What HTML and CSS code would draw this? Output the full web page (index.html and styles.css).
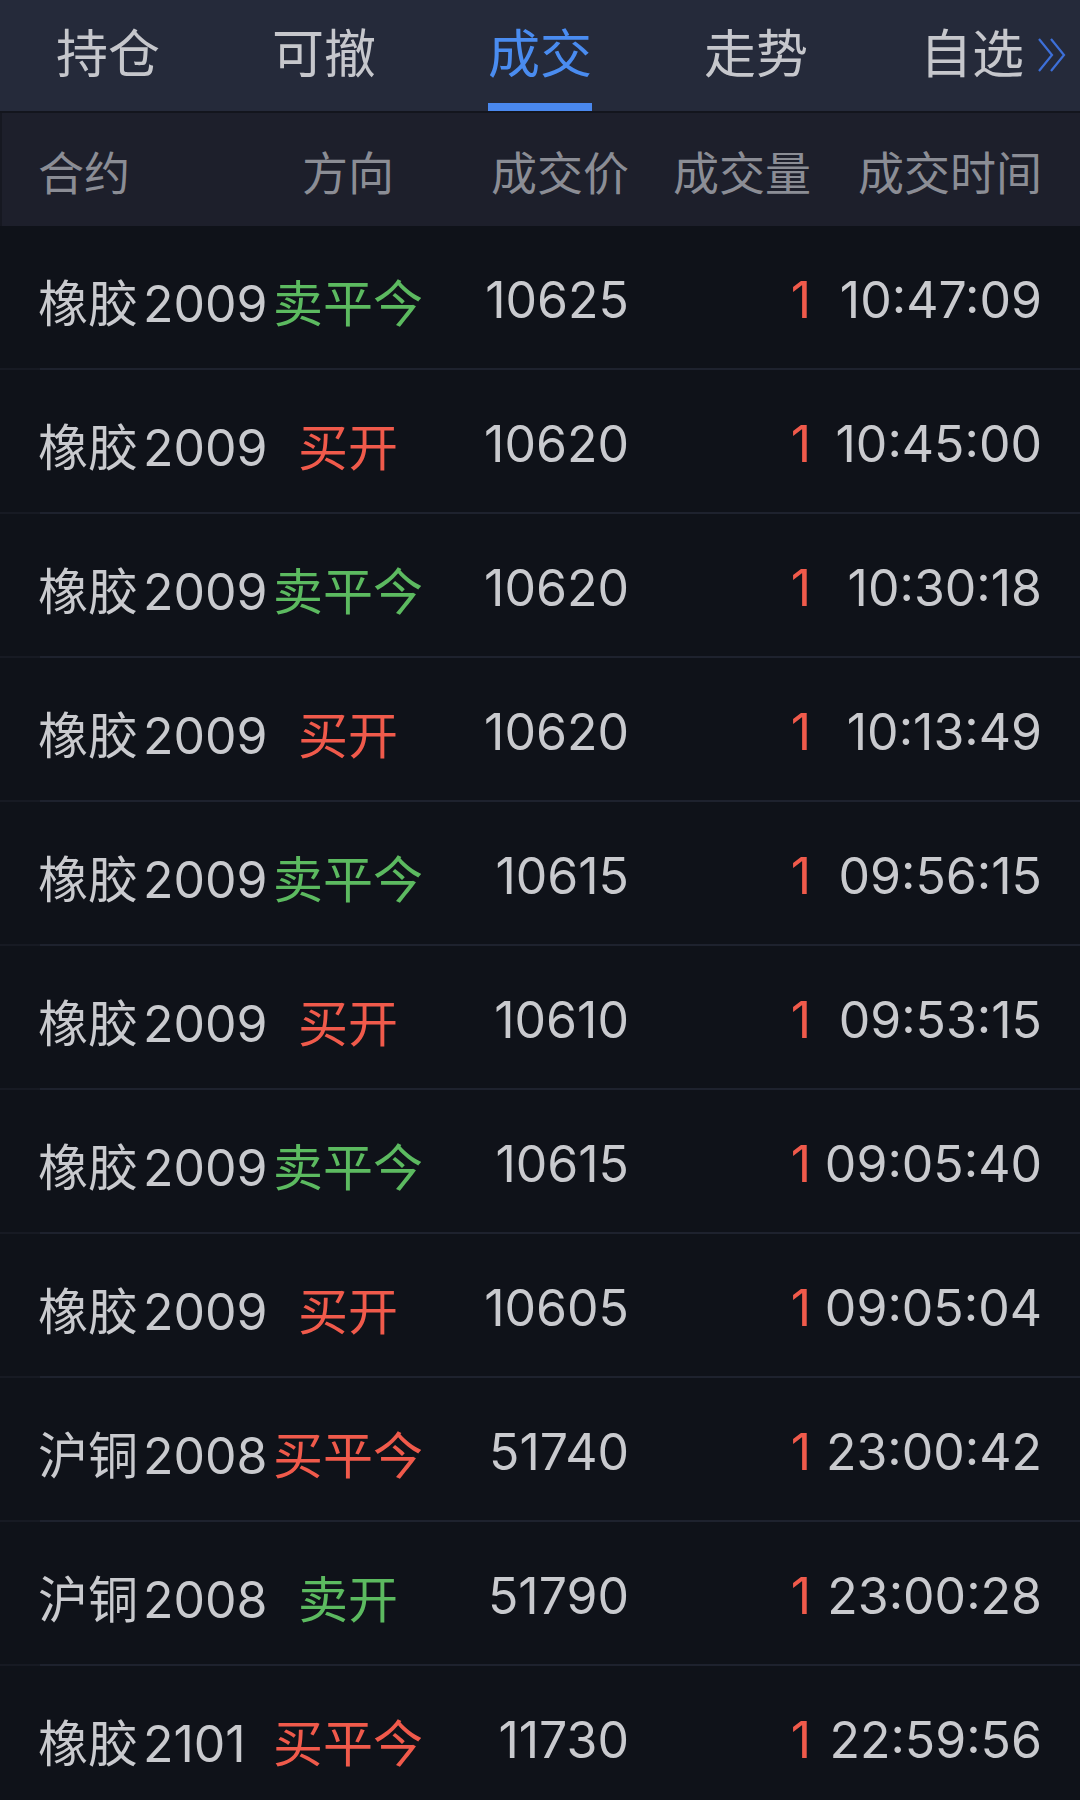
FILE: index.html
```html
<!DOCTYPE html>
<html lang="zh-CN">
<head>
<meta charset="utf-8">
<title>成交</title>
<link rel="stylesheet" href="styles.css">
</head>
<body>
<div class="page">
  <nav class="tabs">
    <div class="tab"><span class="label">持仓</span></div>
    <div class="tab"><span class="label">可撤</span></div>
    <div class="tab active"><span class="label">成交</span></div>
    <div class="tab"><span class="label">走势</span></div>
    <div class="tab"><span class="label">自选</span>
      <svg class="more" width="30" height="36" viewBox="0 0 30 36"><path d="M2 2 L15 18 L2 34 M14 2 L27 18 L14 34" fill="none" stroke="#3d6fd8" stroke-width="2.2" stroke-linejoin="miter"/></svg>
    </div>
  </nav>
  <div class="thead">
    <div class="c-name">合约</div>
    <div class="c-dir">方向</div>
    <div class="c-price">成交价</div>
    <div class="c-vol">成交量</div>
    <div class="c-time">成交时间</div>
  </div>
  <div class="tbody">
    <div class="row"><div class="c-name">橡胶<span class="code">2009</span></div><div class="c-dir green">卖平今</div><div class="c-price">10625</div><div class="c-vol red">1</div><div class="c-time">10:47:09</div></div>
    <div class="row"><div class="c-name">橡胶<span class="code">2009</span></div><div class="c-dir red">买开</div><div class="c-price">10620</div><div class="c-vol red">1</div><div class="c-time">10:45:00</div></div>
    <div class="row"><div class="c-name">橡胶<span class="code">2009</span></div><div class="c-dir green">卖平今</div><div class="c-price">10620</div><div class="c-vol red">1</div><div class="c-time">10:30:18</div></div>
    <div class="row"><div class="c-name">橡胶<span class="code">2009</span></div><div class="c-dir red">买开</div><div class="c-price">10620</div><div class="c-vol red">1</div><div class="c-time">10:13:49</div></div>
    <div class="row"><div class="c-name">橡胶<span class="code">2009</span></div><div class="c-dir green">卖平今</div><div class="c-price">10615</div><div class="c-vol red">1</div><div class="c-time">09:56:15</div></div>
    <div class="row"><div class="c-name">橡胶<span class="code">2009</span></div><div class="c-dir red">买开</div><div class="c-price">10610</div><div class="c-vol red">1</div><div class="c-time">09:53:15</div></div>
    <div class="row"><div class="c-name">橡胶<span class="code">2009</span></div><div class="c-dir green">卖平今</div><div class="c-price">10615</div><div class="c-vol red">1</div><div class="c-time">09:05:40</div></div>
    <div class="row"><div class="c-name">橡胶<span class="code">2009</span></div><div class="c-dir red">买开</div><div class="c-price">10605</div><div class="c-vol red">1</div><div class="c-time">09:05:04</div></div>
    <div class="row"><div class="c-name">沪铜<span class="code">2008</span></div><div class="c-dir red">买平今</div><div class="c-price">51740</div><div class="c-vol red">1</div><div class="c-time">23:00:42</div></div>
    <div class="row"><div class="c-name">沪铜<span class="code">2008</span></div><div class="c-dir green">卖开</div><div class="c-price">51790</div><div class="c-vol red">1</div><div class="c-time">23:00:28</div></div>
    <div class="row"><div class="c-name">橡胶<span class="code">2101</span></div><div class="c-dir red">买平今</div><div class="c-price">11730</div><div class="c-vol red">1</div><div class="c-time">22:59:56</div></div>
  </div>
</div>
</body>
</html>
```
FILE: styles.css
```css
* { box-sizing: border-box; }
html, body {
  margin: 0;
  padding: 0;
  background: #0f1219;
}
body {
  font-family: Inter, "Noto Sans CJK SC", sans-serif;
  color: #c9cace;
}
.page {
  width: 1080px;
  min-height: 1800px;
  background: #0f1219;
  overflow: hidden;
}
.tabs {
  display: grid;
  grid-template-columns: repeat(5, 1fr);
  height: 113px;
  background: #252a3a;
  border-bottom: 2px solid #13151d;
}
.tab {
  position: relative;
  display: flex;
  justify-content: center;
  align-items: flex-end;
  font-size: 52px;
  color: #c6c7cc;
}
.label {
  line-height: 60px;
  padding-bottom: 18px;
  border-bottom: 8px solid transparent;
}
.tab.active .label {
  color: #4a8cf0;
  border-bottom-color: #4a88ee;
}
.more {
  position: absolute;
  right: 13px;
  top: 37px;
}
.thead, .row {
  display: grid;
  grid-template-columns: 200px 220px 171px 182px 231px;
  padding: 0 38px;
  align-items: center;
  white-space: nowrap;
}
.thead {
  height: 113px;
  background: #1d1f2b;
  font-size: 46px;
  color: #8b8d95;
  box-shadow: inset 2px 0 0 #161821;
}
.row {
  height: 144px;
  padding-top: 5px;
  padding-bottom: 2px;
  font-size: 50px;
  background: linear-gradient(90deg, #171a23 40px, #1e222e 40px) left bottom / 100% 2px no-repeat, #0f1219;
}
.code { margin-left: 5px; }
.c-name { text-align: left; }
.c-dir { text-align: center; }
.c-price, .c-vol, .c-time { text-align: right; }
.green { color: #5cba60; }
.red { color: #f05a4b; }
```
